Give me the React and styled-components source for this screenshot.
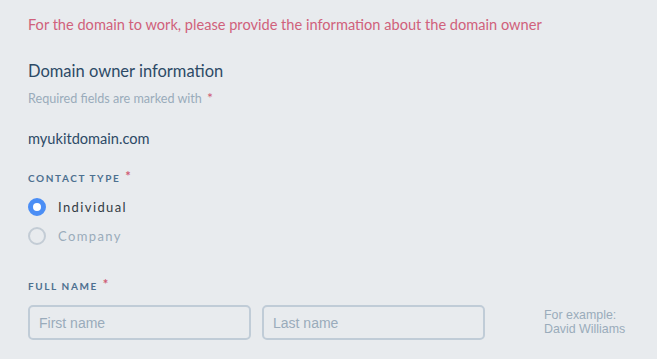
import React from "react";
import styled, { createGlobalStyle } from "styled-components";

const GlobalStyle = createGlobalStyle`
  html, body {
    margin: 0;
    padding: 0;
    background: #e8ebee;
  }
  body {
    font-family: Lato, "Noto Sans", sans-serif;
  }
`;

const Page = styled.div`
  padding: 15px 28px 0 28px;
  width: 657px;
  height: 359px;
  box-sizing: border-box;
  overflow: hidden;
`;

const Notice = styled.p`
  margin: 0;
  font-size: 14.6px;
  line-height: 20px;
  color: #d0617b;
`;

const Title = styled.h2`
  margin: 25px 0 0 0;
  font-size: 16.5px;
  line-height: 22px;
  font-weight: 400;
  color: #2d4a66;
`;

const Hint = styled.p`
  margin: 9px 0 0 0;
  font-size: 12.6px;
  line-height: 16px;
  color: #9aabbb;
`;

const Star = styled.span`
  color: #cf5a74;
  margin-left: 5px;
  font-size: ${p => p.size || 13}px;
  vertical-align: top;
  position: relative;
  top: ${p => p.lift || -2}px;
`;

const Domain = styled.div`
  margin-top: 22px;
  font-size: 14.6px;
  line-height: 20px;
  color: #2d4a66;
`;

const Label = styled.div`
  margin-top: ${p => p.gap}px;
  font-size: 10px;
  line-height: 14px;
  font-weight: 700;
  letter-spacing: 1.6px;
  text-transform: uppercase;
  color: #4d7090;
`;

const Options = styled.div`
  margin-top: 13px;
  display: flex;
  flex-direction: column;
  gap: 11px;
`;

const Option = styled.label`
  display: flex;
  align-items: center;
  gap: 12px;
  font-size: 13px;
  letter-spacing: 1.4px;
  color: ${p => (p.checked ? "#333b44" : "#9aabbb")};
`;

const Radio = styled.span`
  width: 18px;
  height: 18px;
  border-radius: 50%;
  box-sizing: border-box;
  flex-shrink: 0;
  background: ${p => (p.checked ? "#fff" : "transparent")};
  border: ${p => (p.checked ? "5px solid #4b8ef5" : "2px solid #c3ccd5")};
`;

const Row = styled.div`
  margin-top: 12px;
  display: flex;
  align-items: center;
`;

const Input = styled.input`
  width: 223px;
  height: 35px;
  box-sizing: border-box;
  border: 2px solid #c0ccd7;
  border-radius: 5px;
  background: transparent;
  padding: 0 9px;
  margin-right: 11px;
  font-family: "Liberation Sans", Arial, sans-serif;
  font-size: 14px;
  color: #333;
  outline: none;
  &::placeholder {
    color: #9aabbb;
  }
`;

const Example = styled.div`
  margin-left: 48px;
  font-family: "Liberation Sans", Arial, sans-serif;
  font-size: 12.4px;
  line-height: 13.5px;
  color: #9aabbb;
`;

export default function App() {
  return (
    <>
      <GlobalStyle />
      <Page>
        <Notice>
          For the domain to work, please provide the information about the
          domain owner
        </Notice>
        <Title>Domain owner information</Title>
        <Hint>
          Required fields are marked with<Star size={14} lift={-1}>*</Star>
        </Hint>
        <Domain>myukitdomain.com</Domain>
        <Label gap={22}>
          Contact type<Star>*</Star>
        </Label>
        <Options>
          <Option checked>
            <Radio checked />
            Individual
          </Option>
          <Option>
            <Radio />
            Company
          </Option>
        </Options>
        <Label gap={34}>
          Full name<Star>*</Star>
        </Label>
        <Row>
          <Input placeholder="First name" />
          <Input placeholder="Last name" />
          <Example>
            For example:
            <br />
            David Williams
          </Example>
        </Row>
      </Page>
    </>
  );
}
